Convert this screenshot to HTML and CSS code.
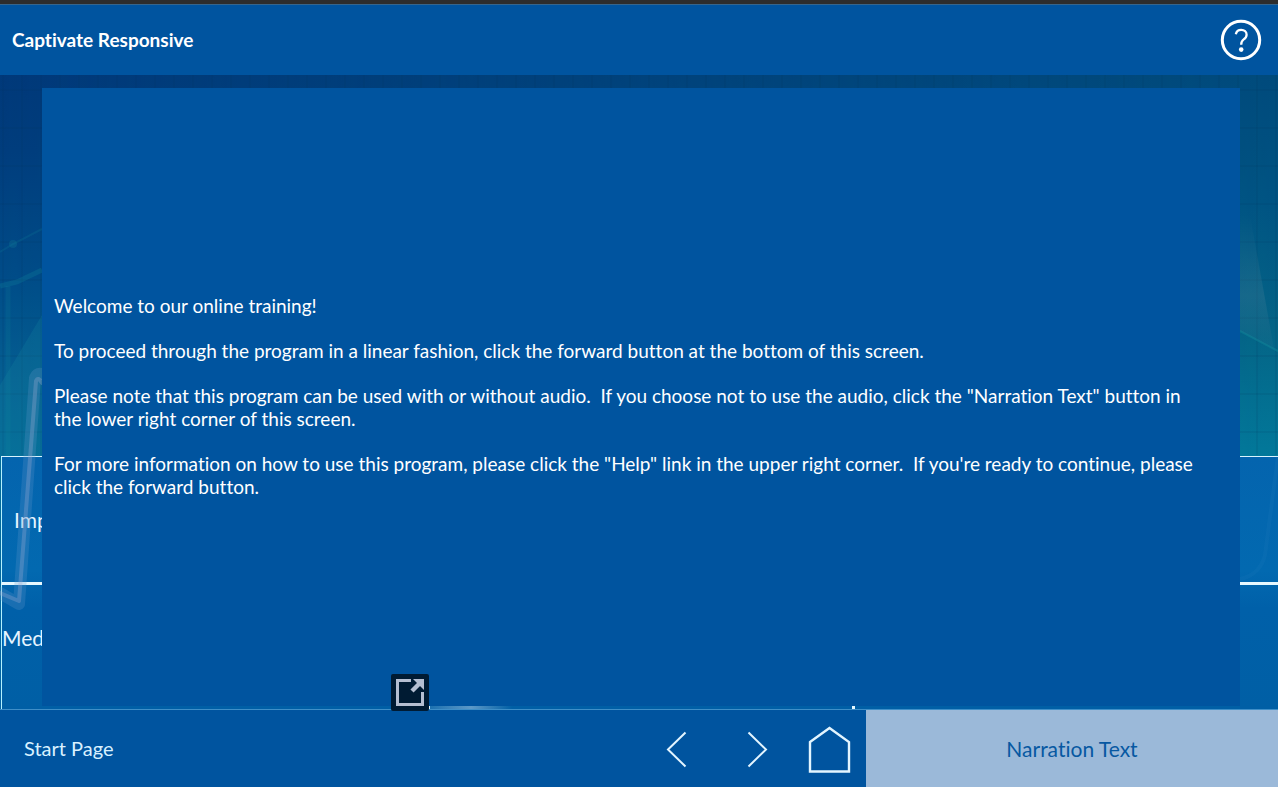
FILE: index.html
```html
<!DOCTYPE html>
<html lang="en">
<head>
<meta charset="utf-8">
<title>Captivate Responsive</title>
<link rel="stylesheet" href="styles.css">
</head>
<body>
<div class="player">
  <header class="header">
    <h1 class="title">Captivate Responsive</h1>
    <button class="icon-button" type="button" aria-label="Help">
      <svg width="42" height="42" viewBox="0 0 42 42" fill="none" stroke="#fff">
        <circle cx="21" cy="21" r="18.7" stroke-width="3"/>
        <path d="M15.800 15.200C16.400 12.200 18.600 10.800 21.200 10.800c3 0 5.400 2 5.400 4.900 0 2.200-1.200 3.500-2.900 4.700-1.800 1.300-2.500 2.400-2.500 5.300" stroke-width="2.300"/>
        <circle cx="21.200" cy="30.600" r="2.300" fill="#fff" stroke="none"/>
      </svg>
    </button>
  </header>

  <main class="slide">
    <svg class="backdrop" viewBox="0 0 1278 634" preserveAspectRatio="none" aria-hidden="true">
      <defs>
        <linearGradient id="left" x1="0" y1="0" x2="0" y2="1">
          <stop offset="0" stop-color="#00397a"/><stop offset=".12" stop-color="#003d7d"/>
          <stop offset=".32" stop-color="#004c88"/><stop offset=".48" stop-color="#055f92"/>
          <stop offset=".62" stop-color="#036c99"/><stop offset="1" stop-color="#0463a4"/>
        </linearGradient>
        <linearGradient id="right" x1="0" y1="0" x2="0" y2="1">
          <stop offset="0" stop-color="#004b7c"/><stop offset=".2" stop-color="#005483"/>
          <stop offset=".4" stop-color="#046486"/><stop offset=".6" stop-color="#02789a"/>
          <stop offset="1" stop-color="#0463a4"/>
        </linearGradient>
        <linearGradient id="across"><stop offset="0" stop-color="#000"/><stop offset="1" stop-color="#fff"/></linearGradient>
        <linearGradient id="haze" x1="0" y1="0" x2="0" y2="1">
          <stop offset="0" stop-color="#3a7894" stop-opacity="0"/><stop offset=".6" stop-color="#3a7894" stop-opacity=".35"/>
          <stop offset="1" stop-color="#3a7894" stop-opacity=".1"/>
        </linearGradient>
        <linearGradient id="glint">
          <stop offset="0" stop-color="#b9d3ea" stop-opacity=".15"/><stop offset=".5" stop-color="#b9d3ea" stop-opacity=".5"/>
          <stop offset="1" stop-color="#b9d3ea" stop-opacity="0"/>
        </linearGradient>
        <mask id="blend"><rect width="1278" height="634" fill="url(#across)"/></mask>
        <pattern id="grid" width="19" height="38" patternUnits="userSpaceOnUse">
          <path d="M3 0v38M0 15h19" stroke="#00305c" stroke-opacity=".2" fill="none"/>
        </pattern>
      </defs>
      <rect width="1278" height="634" fill="url(#left)"/>
      <rect width="1278" height="634" fill="url(#right)" mask="url(#blend)"/>
      <rect width="1278" height="380" fill="url(#grid)"/>
      <g fill="none" stroke="#159aa5">
        <path d="M0 177 13 169 42 154" stroke-opacity=".14" stroke-width="2"/>
        <path d="M0 211 17 207 42 195" stroke-opacity=".2" stroke-width="5"/>
        <path d="M8 211V381" stroke-opacity=".12" stroke-width="5"/>
        <path d="M1240 256 1278 276" stroke-opacity=".3" stroke-width="2"/>
      </g>
      <circle cx="13" cy="169" r="4" fill="#13849c" opacity=".25"/>
      <path d="M0 310 42 240V381H0z" fill="#12829f" opacity=".25"/>
      <path d="M1240 140h10l24 134-34-18z" fill="url(#haze)"/>
    </svg>

    <div class="tiles">
      <a class="tile tile-inset" href="#impact">Imp</a><span class="tile"></span><span class="tile"></span>
      <a class="tile tile-low" href="#media">Med</a><span class="tile"></span><span class="tile"></span>
    </div>

    <svg class="backdrop" viewBox="0 0 1278 634" preserveAspectRatio="none" aria-hidden="true">
      <g fill="none" stroke-linejoin="round" stroke-linecap="round">
        <path d="M0 518 19 529 35 303Q37 298 42 299" stroke="#6497cc" stroke-opacity=".25" stroke-width="12"/>
        <path d="M0 518 19 526 36 306Q38 301 42 308" stroke="#a3abd4" stroke-opacity=".3" stroke-width="4"/>
        <path d="M1278 381 1265 480Q1260 500 1240 504" stroke="#4b9bc8" stroke-opacity=".08" stroke-width="4"/>
      </g>
      <rect x="430" y="631" width="82" height="3" fill="url(#glint)"/>
    </svg>

    <section class="narration">
      <p>Welcome to our online training!</p>
      <p>To proceed through the program in a linear fashion, click the forward button at the bottom of this screen.</p>
      <p>Please note that this program can be used with or without audio.&nbsp; If you choose not to use the audio, click the "Narration Text" button in the lower right corner of this screen.</p>
      <p>For more information on how to use this program, please click the "Help" link in the upper right corner.&nbsp; If you're ready to continue, please click the forward button.</p>
    </section>

    <button class="icon-button popout" type="button" aria-label="Open in new window">
      <svg width="38" height="37" viewBox="0 0 38 37">
        <rect width="38" height="37" rx="2" fill="#001b33"/>
        <path d="M20 6.500H6.500V30.500H31.500V18" fill="none" stroke="#b5bfd2" stroke-width="3"/>
        <path d="M21 17 29 9" stroke="#b5bfd2" stroke-width="4.500"/>
        <path d="M22 5H33V16z" fill="#b5bfd2"/>
      </svg>
    </button>
  </main>

  <footer class="footer">
    <span class="page-name">Start Page</span>
    <nav class="nav">
      <button class="icon-button" type="button" aria-label="Back">
        <svg width="24" height="40" viewBox="0 0 24 40" fill="none" stroke="#e3f5ff" stroke-width="2"><path d="M20.500 3.500 3 20.500 20.500 37.500"/></svg>
      </button>
      <button class="icon-button" type="button" aria-label="Forward">
        <svg width="24" height="40" viewBox="0 0 24 40" fill="none" stroke="#e3f5ff" stroke-width="2"><path d="M3.500 3.500 21 20.500 3.500 37.500"/></svg>
      </button>
      <button class="icon-button" type="button" aria-label="Home">
        <svg width="44" height="48" viewBox="0 0 44 48" fill="none" stroke="#e3f5ff" stroke-width="2.400"><path d="M3 17 22.500 3 42 17V46.500H3z"/></svg>
      </button>
    </nav>
    <button class="narration-toggle" type="button">Narration Text</button>
  </footer>
</div>
</body>
</html>
```
FILE: styles.css
```css
* { box-sizing: border-box; }

body {
  margin: 0;
  background: #00549f;
  color: #fff;
  font-family: "Century Gothic", Lato, sans-serif;
  font-size: 19px;
  font-variant-ligatures: none;
  line-height: 23px;
}

.player {
  display: grid;
  grid-template-rows: auto 1fr auto;
  min-height: 100vh;
  border-top: 4px solid #2d2d2d;
}

.header {
  display: flex;
  align-items: center;
  justify-content: space-between;
  height: 71px;
  padding: 0 16px 0 12px;
  border-top: 1px solid #37658b;
  background: #00549f;
}

.title {
  margin: 0;
  padding-bottom: 2px;
  font-size: 19px;
  font-weight: 700;
}

.icon-button {
  display: block;
  padding: 0;
  border: 0;
  background: none;
  cursor: pointer;
}

.icon-button svg { display: block; }

.slide {
  position: relative;
  z-index: 1;
  display: flex;
  flex-direction: column;
  justify-content: flex-end;
}

.backdrop {
  position: absolute;
  inset: 0;
  width: 100%;
  height: 100%;
  pointer-events: none;
}

.tiles {
  position: relative;
  display: grid;
  grid-template-columns: repeat(3, 1fr);
  grid-template-rows: 128px 124px;
  margin-left: 1px;
  border-top: 1px solid #d9f4ff;
  background: linear-gradient(#0464ae, #0269b0 45%, #0060a9 60%, #005fa5);
  font-size: 21px;
}

.tile {
  display: flex;
  align-items: center;
  border-left: 3px solid #e6f8ff;
  border-bottom: 3px solid #e6f8ff;
  color: #e6f4ff;
  text-decoration: none;
}

.tile:nth-child(n + 4) { border-bottom: 0; }
.tile-inset, .tile-low { border-left: 1px solid #b5f2ff; }
.tile-inset { padding-left: 12px; }
.tile-low { padding-bottom: 20px; }

.narration {
  position: absolute;
  inset: 13px 38px 3px 42px;
  display: flex;
  flex-direction: column;
  justify-content: center;
  gap: 22px;
  padding: 0 32px 3px 12px;
  background: #00549f;
}

.narration p { margin: 0; }

.popout {
  position: absolute;
  left: 391px;
  bottom: -2px;
}

.footer {
  display: grid;
  grid-template-columns: 1fr auto 412px;
  align-items: center;
  height: 78px;
  border-top: 1px solid #3f8fc8;
  background: #00549f;
}

.page-name {
  padding-left: 24px;
  color: #d9f1ff;
  font-size: 20px;
}

.nav {
  display: flex;
  align-items: center;
  gap: 56px;
  padding-right: 15px;
}

.nav .icon-button:last-child { margin-left: -18px; }

.narration-toggle {
  align-self: stretch;
  border: 0;
  background: #9bb9d9;
  color: #0758a2;
  font: inherit;
  font-size: 21px;
  cursor: pointer;
}
```
